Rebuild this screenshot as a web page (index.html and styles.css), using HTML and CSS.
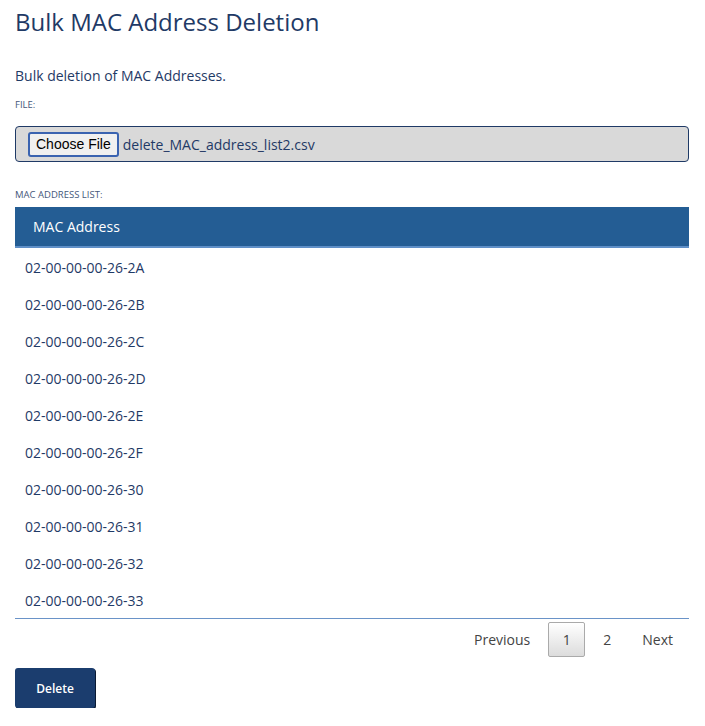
FILE: index.html
```html
<!DOCTYPE html>
<html>
<head>
<meta charset="utf-8">
<link rel="stylesheet" href="styles.css">
</head>
<body>
<div class="page">
  <h1 class="title">Bulk MAC Address Deletion</h1>
  <p class="intro">Bulk deletion of MAC Addresses.</p>
  <div class="label">FILE:</div>
  <div class="file-box">
    <span class="choose-btn">Choose File</span>
    <span class="file-name">delete_MAC_address_list2.csv</span>
  </div>
  <div class="label list-label">MAC ADDRESS LIST:</div>
  <div class="table">
    <div class="thead">MAC Address</div>
    <div class="row">02-00-00-00-26-2A</div>
    <div class="row">02-00-00-00-26-2B</div>
    <div class="row">02-00-00-00-26-2C</div>
    <div class="row">02-00-00-00-26-2D</div>
    <div class="row">02-00-00-00-26-2E</div>
    <div class="row">02-00-00-00-26-2F</div>
    <div class="row">02-00-00-00-26-30</div>
    <div class="row">02-00-00-00-26-31</div>
    <div class="row">02-00-00-00-26-32</div>
    <div class="row">02-00-00-00-26-33</div>
  </div>
  <div class="pager">
    <span class="pg">Previous</span>
    <span class="pg current">1</span>
    <span class="pg">2</span>
    <span class="pg last">Next</span>
  </div>
  <button class="delete-btn">Delete</button>
</div>
</body>
</html>
```
FILE: styles.css
```css
html, body {
  margin: 0;
  padding: 0;
  background: #fff;
}
.page {
  padding: 0 16px 0 15px;
  font-family: "Open Sans", "Noto Sans", sans-serif;
  color: #1f3a66;
}
.title {
  margin: 0;
  padding-top: 5px;
  font-size: 24px;
  font-weight: 400;
  line-height: 33px;
  color: #1f3a66;
}
.intro {
  margin: 28px 0 0;
  font-size: 14px;
  line-height: 20px;
}
.label {
  margin-top: 13px;
  font-size: 9.5px;
  line-height: 12px;
  color: #46587a;
  text-transform: uppercase;
}
.file-box {
  margin-top: 15px;
  height: 34px;
  border: 1px solid #1f3a66;
  border-radius: 4px;
  background: #d9d9d9;
  display: flex;
  align-items: center;
  padding-left: 12px;
}
.choose-btn {
  font-family: "Liberation Sans", Arial, sans-serif;
  font-size: 14px;
  color: #000;
  background: #f0f0f0;
  border: 2px solid #3a63b0;
  border-radius: 3px;
  padding: 2px 6px;
  line-height: 17px;
}
.file-name {
  margin-left: 4px;
  font-size: 14px;
  color: #1f3a66;
}
.list-label {
  margin-top: 27px;
}
.table {
  margin-top: 6px;
  border-bottom: 1px solid #6a93c8;
}
.thead {
  height: 39px;
  line-height: 39px;
  background: #245d94;
  border-bottom: 2px solid #5f8fc7;
  color: #fff;
  font-size: 14px;
  padding-left: 18px;
}
.row {
  height: 34px;
  line-height: 34px;
  padding-top: 3px;
  font-size: 14px;
  padding-left: 10px;
  color: #1f3a66;
}
.pager {
  display: flex;
  justify-content: flex-end;
  align-items: center;
  margin-top: 3px;
}
.pg {
  font-size: 14px;
  color: #444;
  padding: 0 15px;
  line-height: 33px;
  border: 1px solid transparent;
  border-radius: 2px;
}
.pg.last {
  padding: 0 15px 0 14px;
}
.pg.current {
  border-color: #aaa;
  background: linear-gradient(#fff, #dcdcdc);
  padding: 0;
  width: 35px;
  text-align: center;
  margin: 0 2px;
}
.delete-btn {
  display: block;
  margin-top: 11px;
  width: 80px;
  height: 40px;
  background: #1b3d6e;
  color: #fff;
  border: none;
  border-radius: 3px;
  box-shadow: 1px 1px 0 #0a1a33;
  font-family: "Open Sans", sans-serif;
  font-size: 12px;
  font-weight: 600;
}
```
